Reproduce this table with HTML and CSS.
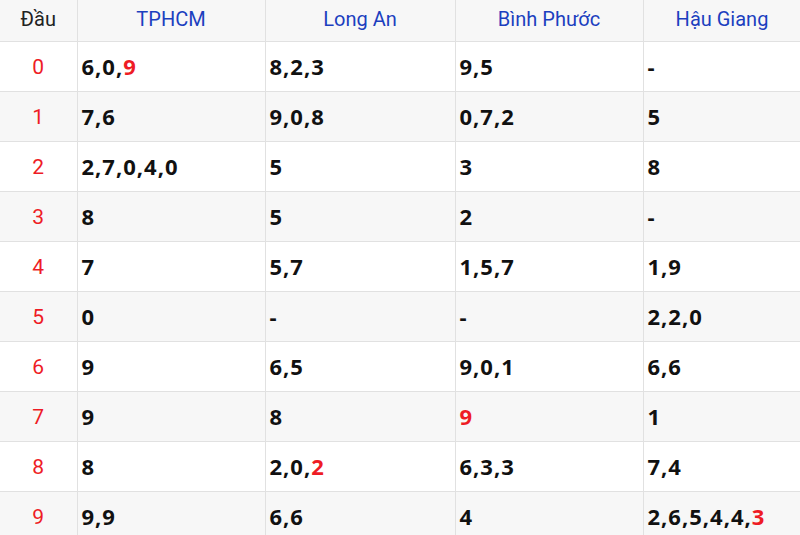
FILE: index.html
```html
<!DOCTYPE html>
<html lang="vi">
<head>
<meta charset="utf-8">
<link rel="stylesheet" href="styles.css">
</head>
<body>
<table class="loto">
  <colgroup>
    <col class="c-dau"><col class="c-a"><col class="c-b"><col class="c-c"><col class="c-d">
  </colgroup>
  <thead>
    <tr><th class="dau">Đầu</th><th>TPHCM</th><th>Long An</th><th>Bình Phước</th><th>Hậu Giang</th></tr>
  </thead>
  <tbody>
    <tr><td class="dau">0</td><td>6,0,<span class="hl">9</span></td><td>8,2,3</td><td>9,5</td><td>-</td></tr>
    <tr><td class="dau">1</td><td>7,6</td><td>9,0,8</td><td>0,7,2</td><td>5</td></tr>
    <tr><td class="dau">2</td><td>2,7,0,4,0</td><td>5</td><td>3</td><td>8</td></tr>
    <tr><td class="dau">3</td><td>8</td><td>5</td><td>2</td><td>-</td></tr>
    <tr><td class="dau">4</td><td>7</td><td>5,7</td><td>1,5,7</td><td>1,9</td></tr>
    <tr><td class="dau">5</td><td>0</td><td>-</td><td>-</td><td>2,2,0</td></tr>
    <tr><td class="dau">6</td><td>9</td><td>6,5</td><td>9,0,1</td><td>6,6</td></tr>
    <tr><td class="dau">7</td><td>9</td><td>8</td><td><span class="hl">9</span></td><td>1</td></tr>
    <tr><td class="dau">8</td><td>8</td><td>2,0,<span class="hl">2</span></td><td>6,3,3</td><td>7,4</td></tr>
    <tr><td class="dau">9</td><td>9,9</td><td>6,6</td><td>4</td><td>2,6,5,4,4,<span class="hl">3</span></td></tr>
  </tbody>
</table>
</body>
</html>
```
FILE: styles.css
```css
html, body {
  margin: 0;
  padding: 0;
  background: #fff;
}
.loto {
  width: 801px;
  border-collapse: collapse;
  table-layout: fixed;
  font-family: Roboto, "Liberation Sans", sans-serif;
}
.c-dau { width: 77px; }
.c-a { width: 188px; }
.c-b { width: 190px; }
.c-c { width: 188px; }
.c-d { width: 158px; }
.loto th, .loto td {
  border: 1px solid #e1e1e1;
  padding: 0 0 0 4px;
}
.loto tr > :first-child { border-left: none; }
.loto thead th {
  border-top: none;
  height: 37px;
  padding-bottom: 4px;
  padding-left: 0;
  background: #f7f7f7;
  font-weight: 400;
  font-size: 20px;
  color: #1c3fbf;
  text-align: center;
  vertical-align: middle;
}
.loto thead th.dau { color: #222; }
.loto tbody td {
  height: 47px;
  padding-bottom: 2px;
  font-family: "Open Sans", Roboto, sans-serif;
  font-weight: 700;
  font-size: 22px;
  letter-spacing: 1px;
  color: #111;
  vertical-align: middle;
}
.loto tbody tr:nth-child(even) td { background: #f7f7f7; }
.loto tbody td.dau {
  font-family: Roboto, sans-serif;
  font-weight: 400;
  font-size: 21px;
  letter-spacing: 0;
  color: #ee1c25;
  text-align: center;
  padding-left: 0;
  padding-bottom: 0;
  height: 49px;
}
.hl { color: #ee1c25; }
```
